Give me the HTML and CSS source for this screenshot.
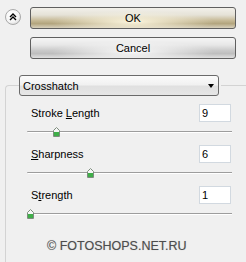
FILE: index.html
```html
<!DOCTYPE html>
<html lang="en">
<head>
  <meta charset="UTF-8">
  <title>Crosshatch</title>
  <link rel="stylesheet" href="styles.css">
</head>
<body>

  <div class="top">
    <button class="collapse-btn" title="Collapse">
      <svg width="16" height="16" viewBox="0 0 16 16">
        <circle cx="8" cy="8" r="7.5" fill="url(#knob)" stroke="#a9a9a9"/>
        <defs>
          <radialGradient id="knob" cx="0.4" cy="0.35" r="0.7">
            <stop offset="0" stop-color="#ffffff"/>
            <stop offset="0.7" stop-color="#f4f4f4"/>
            <stop offset="1" stop-color="#d6d6d6"/>
          </radialGradient>
        </defs>
        <polyline points="5,8 8,5 11,8" fill="none" stroke="#000" stroke-width="1.4"/>
        <polyline points="5,11 8,8 11,11" fill="none" stroke="#000" stroke-width="1.4"/>
      </svg>
    </button>
    <div class="actions">
      <button class="btn btn-default">OK</button>
      <button class="btn">Cancel</button>
    </div>
  </div>

  <fieldset class="group">
    <legend>
      <div class="dropdown">
        <span>Crosshatch</span>
        <span class="arrow"></span>
      </div>
    </legend>

    <div class="params">
      <div class="param">
        <div class="param-head">
          <label>Stroke <u>L</u>ength</label>
          <input type="text" value="9">
        </div>
        <div class="slider">
          <div class="track"></div>
          <div class="thumb" style="left: 26px;">
            <svg width="7" height="10" viewBox="0 0 7 10">
              <polygon points="3.5,0.5 6.5,3.5 6.5,9.5 0.5,9.5 0.5,3.5" fill="#f6f6f6" stroke="#7d8c7d"/>
              <rect x="1" y="5" width="5" height="4" fill="#3fae49"/>
            </svg>
          </div>
        </div>
      </div>

      <div class="param">
        <div class="param-head">
          <label><u>S</u>harpness</label>
          <input type="text" value="6">
        </div>
        <div class="slider">
          <div class="track"></div>
          <div class="thumb" style="left: 60px;">
            <svg width="7" height="10" viewBox="0 0 7 10">
              <polygon points="3.5,0.5 6.5,3.5 6.5,9.5 0.5,9.5 0.5,3.5" fill="#f6f6f6" stroke="#7d8c7d"/>
              <rect x="1" y="5" width="5" height="4" fill="#3fae49"/>
            </svg>
          </div>
        </div>
      </div>

      <div class="param">
        <div class="param-head">
          <label>S<u>t</u>rength</label>
          <input type="text" value="1">
        </div>
        <div class="slider">
          <div class="track"></div>
          <div class="thumb" style="left: 0px;">
            <svg width="7" height="10" viewBox="0 0 7 10">
              <polygon points="3.5,0.5 6.5,3.5 6.5,9.5 0.5,9.5 0.5,3.5" fill="#f6f6f6" stroke="#7d8c7d"/>
              <rect x="1" y="5" width="5" height="4" fill="#3fae49"/>
            </svg>
          </div>
        </div>
      </div>

      <p class="copyright">© FOTOSHOPS.NET.RU</p>
    </div>
  </fieldset>

</body>
</html>
```

FILE: styles.css
```css
body {
  margin: 0;
  background-color: #f0f0f0;
  color: #000;
  font-family: "Liberation Sans", Arial, sans-serif;
  font-size: 11px;
  overflow: hidden;
}

.top {
  display: flex;
  gap: 9px;
  padding: 7px 10px 0 5px;
}

.collapse-btn {
  width: 16px;
  height: 16px;
  margin-top: 2px;
  padding: 0;
  border: none;
  background: none;
  cursor: pointer;
}

.collapse-btn svg {
  display: block;
}

.actions {
  display: flex;
  flex-direction: column;
  gap: 8px;
  width: 206px;
}

.btn {
  height: 22px;
  padding: 0;
  border: 1px solid #5f5f5f;
  border-radius: 3px;
  font-family: inherit;
  font-size: 11px;
  color: #000;
  cursor: pointer;
  background:
    radial-gradient(ellipse 40% 55% at 50% 70%, rgba(255, 255, 255, 0.9), rgba(255, 255, 255, 0)),
    linear-gradient(to bottom, #f5f5f5 0%, #e7e7e7 35%, #cacaca 62%, #bebebe 78%, #e0e0e0 100%);
}

.btn-default {
  background:
    radial-gradient(ellipse 40% 55% at 50% 70%, rgba(255, 249, 226, 0.95), rgba(255, 249, 226, 0)),
    linear-gradient(to bottom, #f2f0ea 0%, #e5e2d7 35%, #c7ba97 62%, #b3a57e 78%, #d8d1bd 100%);
}

.group {
  margin: 16px 0 0 5px;
  padding: 0 0 20px 0;
  border: 1px solid #d3d3d3;
  border-right: none;
  border-bottom: none;
  border-radius: 4px 0 0 0;
}

.group legend {
  margin-left: 13px;
  padding: 0 2px 0 0;
}

.dropdown {
  display: flex;
  justify-content: space-between;
  align-items: center;
  box-sizing: border-box;
  width: 200px;
  height: 21px;
  padding: 0 4px 0 3px;
  border: 1px solid #6a6a6a;
  border-radius: 3px;
  background: linear-gradient(to bottom, #fbfbfb 0%, #f1f1f1 45%, #e0e0e0 55%, #e6e6e6 100%);
}

.arrow {
  width: 0;
  height: 0;
  border-left: 3.5px solid transparent;
  border-right: 3.5px solid transparent;
  border-top: 4px solid #000;
  margin-top: 1px;
}

.params {
  padding: 8px 14px 0 21px;
}

.param-head {
  display: flex;
  justify-content: space-between;
  align-items: center;
  height: 18px;
}

.param-head label {
  padding-left: 4px;
}

.param-head input[type="text"] {
  box-sizing: border-box;
  width: 32px;
  height: 18px;
  margin: 0 1px 0 0;
  padding: 0 2px;
  border: 1px solid #d2d9e0;
  background-color: #fff;
  font-family: inherit;
  font-size: 11px;
  color: #000;
}

.slider {
  position: relative;
  height: 23px;
}

.track {
  position: absolute;
  left: 0;
  right: 0;
  top: 9px;
  height: 1px;
  background-color: #9d9d9d;
  border-bottom: 1px solid #fff;
  border-radius: 1px 0 0 1px;
}

.thumb {
  position: absolute;
  top: 5px;
  width: 7px;
  height: 10px;
}

.thumb svg {
  display: block;
}

.copyright {
  margin: 12px 0 0 0;
  padding-left: 20px;
  line-height: 14px;
  font-size: 12.5px;
  color: #4d4d4d;
  text-shadow: 0 0 1px rgba(0, 0, 0, 0.25);
}
```
